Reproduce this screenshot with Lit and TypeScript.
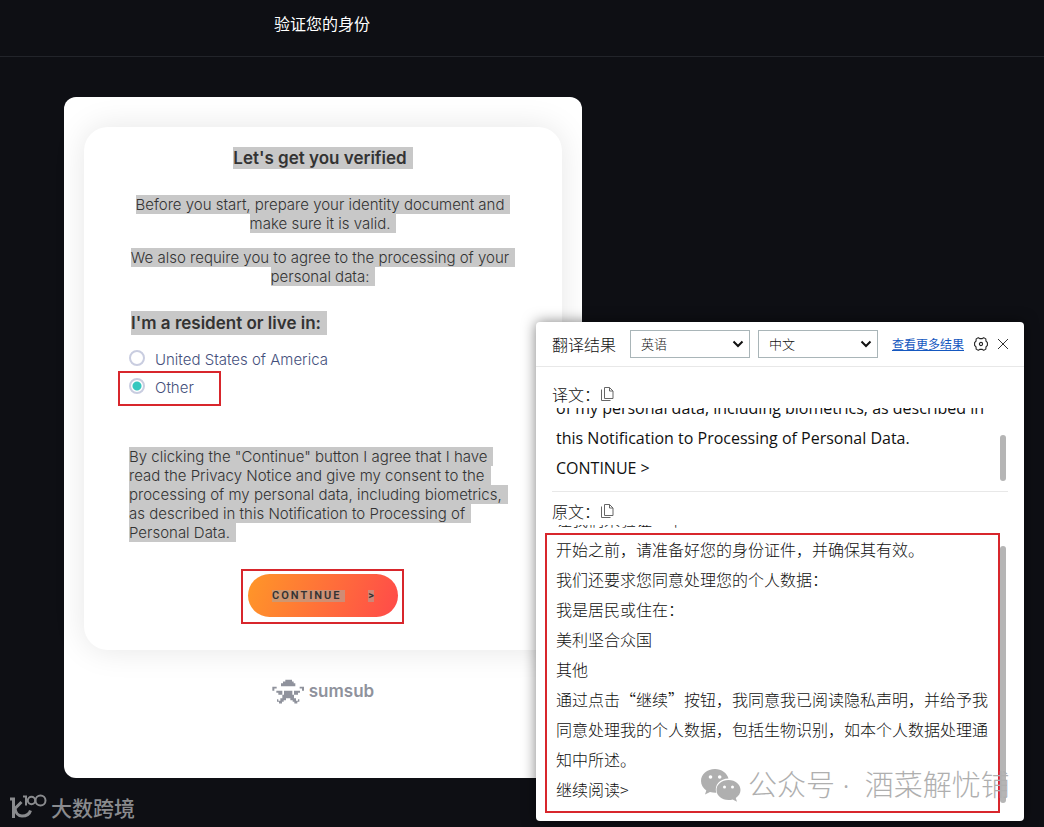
import { LitElement, html, css, svg } from "lit";
import { customElement, state } from "lit/decorators.js";

const copyIcon = svg`<svg width="13" height="14" viewBox="0 0 13 14" fill="none" stroke="#666" stroke-width="1">
  <path d="M3.500 .5h5l3.500 3.500v7.500h-8.500z"/><path d="M8.500 .5v3.500h3.500M.5 2.500v11h9"/></svg>`;

const gearIcon = svg`<svg width="14" height="14" viewBox="0 0 14 14" fill="none" stroke="#222" stroke-width="1.100">
  <path stroke-linejoin="round" d="M3.900.9h.9l.9.700h2.600l.9-.7h.9l1.700 1 .2 2.200 1.400 1.600v2.600l-1.400 1.600-.2 2.200-1.700 1h-.9l-.9-.7h-2.600l-.9.7h-.9l-1.700-1-.2-2.200L.6 8.300v-2.600l1.400-1.600.2-2.200z"/><circle cx="7" cy="7" r="1.600"/></svg>`;

const closeIcon = svg`<svg width="12" height="12" viewBox="0 0 12 12" fill="none" stroke="#333" stroke-width="1"><path d="M1 1l10 10M11 1L1 11"/></svg>`;

const brandIcon = svg`<svg width="32" height="25" viewBox="68 55 96 74" fill="#8f929c">
  <path d="M108 57h20v5h5v5h5v9H95v-9h6v-5h7z"/>
  <path d="M69 78h13v5h-7v7h-6zM151 78h13v12h-6v-7h-7z"/>
  <path d="M81 90h18v12h-12v-6h-6zM134 90h18v6h-6v6h-12z"/>
  <path d="M104 90h25v12h5v16h-11v-6h-13v6h-11v-16h5z"/>
  <path d="M93 112h10v11h-5v5h-9v-5h-6v-8h4v5h6zM140 112h-10v11h5v5h9v-5h6v-8h-4v5h-6z"/></svg>`;

const chatIcon = svg`<svg width="40" height="33" viewBox="0 0 40 33">
  <path fill="#afafaf" d="M14 0C6 0 0 5.200 0 12c0 4 2 7.200 5.300 9.400L4 25.500l5-2.500c2 .6 4 .9 6.300.8C13 16 19 9.500 27.500 9.500 26 4 20.500 0 14 0z"/>
  <path fill="#afafaf" d="M27.500 11C20.500 11 15.500 15.500 15.500 21s5 10 12 10c1.500 0 2.900-.2 4.200-.6l4.300 2.300-1.200-3.800C37.800 27 39.500 24.200 39.500 21c0-5.500-5-10-12-10z"/>
  <g fill="#fff"><circle cx="9.500" cy="8" r="1.800"/><circle cx="18.700" cy="8" r="1.800"/><circle cx="23.500" cy="18" r="1.500"/><circle cx="31.500" cy="18" r="1.500"/></g></svg>`;

const centuryIcon = svg`<svg width="37" height="26" viewBox="0 0 37 26" fill="none" stroke="#8a8b8e">
  <path stroke-width="3" d="M0 5h3.500v19M11.500 8l-6.500 6.500c.5 4 3 7.500 7 7.500 4.500 0 7.500-2 8.500-5.500"/>
  <path stroke-width="2" d="M13 2.500h3v9"/><circle stroke-width="2" cx="21.500" cy="6.500" r="3.700"/><circle stroke-width="2" cx="30.500" cy="6.500" r="5"/></svg>`;

@customElement("verify-card")
class VerifyCard extends LitElement {
  @state() private country = "other";

  static styles = css`
    :host { display: block; max-width: 518px; box-sizing: border-box; padding: 30px 20px; border-radius: 12px; background: #fff; font-family: Inter, "Noto Sans CJK SC", sans-serif; color: #333; }
    h1, h2, p { margin: 0; }
    .panel { padding: 20px 45px 33px; border-radius: 24px; box-shadow: 0 0 32px rgba(0, 0, 0, 0.1); }
    .line { display: block; width: fit-content; padding-right: 6px; background: #c8c8c8; white-space: nowrap; }
    .center .line { margin: 0 auto; }
    h1 { font-size: 17px; line-height: 22px; font-weight: 600; margin-bottom: 26px; }
    h2 { font-size: 17px; line-height: 24px; font-weight: 600; margin: 25px 0 10px; padding-left: 2px; }
    p { font-size: 15px; line-height: 19px; font-weight: 300; }
    .intro { margin-bottom: 15px; }
    fieldset { border: 0; margin: 0 0 46px; padding: 0; min-width: 0; }
    label { position: relative; display: flex; align-items: center; gap: 10px; width: fit-content; height: 28px; font-size: 15px; color: #45507c; font-weight: 300; }
    input { appearance: none; box-sizing: border-box; width: 16px; height: 16px; margin: 0 0 2px; border: 2px solid #c9cde0; border-radius: 50%; background: #fff; }
    input:checked { background: radial-gradient(circle, #35c7bf 4px, #fff 5px); }
    .mark { position: absolute; border: 2px solid #d8262c; pointer-events: none; }
    .mark-option { inset: -2px -27px -5px -11px; }
    .mark-action { inset: -5px -6px -7px -7px; }
    .action { position: relative; width: fit-content; margin: 32px auto 0; }
    button { display: flex; align-items: center; justify-content: space-between; width: 150px; height: 43px; padding: 0 24px; border: 0; border-radius: 22px; background: linear-gradient(110deg, #ff9728, #ff4a4a); font: 600 11px/12px Roboto, sans-serif; color: #333; }
    .word { letter-spacing: 2px; padding-right: 3px; }
    button span { background: rgba(175, 165, 155, 0.6); }
    .brand { display: flex; align-items: center; justify-content: center; gap: 5px; margin: 28px 0 44px; font: 600 17px/26px Inter, sans-serif; color: #8f929c; }
  `;

  private option(value: string, text: string) {
    return html`<label>
      <input type="radio" name="country" .checked=${this.country === value} @change=${() => (this.country = value)} />${text}
      ${value === "other" ? html`<span class="mark mark-option"></span>` : ""}
    </label>`;
  }

  render() {
    return html`
      <section class="panel">
        <h1 class="center"><span class="line">Let's get you verified</span></h1>
        <p class="center intro"><span class="line">Before you start, prepare your identity document and </span><span class="line">make sure it is valid. </span></p>
        <p class="center"><span class="line">We also require you to agree to the processing of your </span><span class="line">personal data:</span></p>
        <h2><span class="line">I'm a resident or live in:</span></h2>
        <fieldset>${this.option("usa", "United States of America")}${this.option("other", "Other")}</fieldset>
        <p><span class="line">By clicking the "Continue" button I agree that I have</span><span class="line">read the Privacy Notice and give my consent to the</span><span class="line">processing of my personal data, including biometrics,</span><span class="line">as described in this Notification to Processing of</span><span class="line">Personal Data.</span></p>
        <div class="action">
          <button type="button"><span class="word">CONTINUE</span><span>&gt;</span></button>
          <span class="mark mark-action"></span>
        </div>
      </section>
      <div class="brand">${brandIcon}<span>sumsub</span></div>
    `;
  }
}

@customElement("translate-popup")
class TranslatePopup extends LitElement {
  static styles = css`
    :host { display: flex; flex-direction: column; box-sizing: border-box; border-radius: 4px; background: #fff; box-shadow: 0 0 14px rgba(0, 0, 0, 0.5); font-family: "Noto Sans", "Noto Sans CJK SC", sans-serif; font-size: 16px; font-weight: 300; color: #111; }
    header { display: flex; align-items: center; height: 44px; padding: 0 15px 0 16px; border-bottom: 1px solid #e8e8e8; }
    .title { flex: 1; white-space: nowrap; }
    .pick { position: relative; margin-right: 8px; }
    select { display: block; appearance: none; width: 120px; height: 28px; padding: 0 10px 2px; border: 1px solid #a9b5b8; border-radius: 0; background: #fff; color: #111; font: 300 13px "Noto Sans CJK SC", sans-serif; }
    .pick svg { position: absolute; right: 6px; top: 10px; pointer-events: none; }
    a { margin: 0 10px 0 6px; font-size: 12px; font-weight: 400; color: #1558c0; white-space: nowrap; }
    button { display: flex; padding: 0; border: 0; background: none; }
    .tools { display: flex; align-items: center; gap: 9px; }
    section { margin: 0 16px; }
    .result { border-bottom: 1px solid #e8e8e8; padding: 13px 0 8px; }
    .source { padding-top: 5px; }
    .caption { display: flex; align-items: center; gap: 1px; height: 28px; }
    .scroll { position: relative; display: flex; flex-direction: column; justify-content: flex-end; overflow: hidden; padding-left: 4px; line-height: 30px; }
    .scroll p { margin: 0; white-space: nowrap; }
    .result .scroll { height: 75px; font-family: "Open Sans", sans-serif; font-weight: 400; }
    .source .scroll { height: 279px; font-family: "Noto Sans CJK SC", sans-serif; }
    .thumb { position: absolute; right: 2px; width: 6px; border-radius: 3px; background: #b5b5b5; }
    .result .thumb { top: 27px; bottom: 2px; }
    .source .thumb { top: 21px; bottom: 1px; }
    .mark { position: absolute; inset: 211px 24px 8px 9px; border: 2px solid #d8262c; pointer-events: none; }
    .stamp { position: absolute; left: 165px; bottom: 16px; display: flex; align-items: center; gap: 7px; font: 300 29px/40px "Noto Sans", "Noto Sans CJK SC", sans-serif; color: #afafaf; white-space: pre; pointer-events: none; }
  `;

  private pick(label: string, value: string) {
    return html`<span class="pick"><select aria-label=${label}><option>${value}</option></select>
      <svg width="12" height="8" viewBox="0 0 12 8" fill="none" stroke="#111" stroke-width="2"><path d="M1.500 1.500l4.500 4.500 4.500-4.500"/></svg></span>`;
  }

  render() {
    const source = ["让我们来验证一下", "开始之前，请准备好您的身份证件，并确保其有效。", "我们还要求您同意处理您的个人数据：", "我是居民或住在：", "美利坚合众国", "其他", "通过点击“继续”按钮，我同意我已阅读隐私声明，并给予我", "同意处理我的个人数据，包括生物识别，如本个人数据处理通", "知中所述。", "继续阅读>"];
    const result = ["of my personal data, including biometrics, as described in", "this Notification to Processing of Personal Data.", "CONTINUE >"];
    return html`
      <header>
        <span class="title">翻译结果</span>
        ${this.pick("源语言", "英语")}${this.pick("目标语言", "中文")}
        <a href="#">查看更多结果</a>
        <span class="tools"><button type="button" aria-label="设置">${gearIcon}</button><button type="button" aria-label="关闭">${closeIcon}</button></span>
      </header>
      <section class="result">
        <div class="caption">译文：<button type="button" aria-label="复制">${copyIcon}</button></div>
        <div class="scroll">${result.map((t) => html`<p>${t}</p>`)}<span class="thumb"></span></div>
      </section>
      <section class="source">
        <div class="caption">原文：<button type="button" aria-label="复制">${copyIcon}</button></div>
        <div class="scroll" lang="zh-CN">${source.map((t) => html`<p>${t}</p>`)}<span class="thumb"></span></div>
      </section>
      <span class="mark"></span>
      <div class="stamp">${chatIcon}<span>公众号 ·  酒菜解忧铺</span></div>
    `;
  }
}

@customElement("app-root")
class AppRoot extends LitElement {
  static styles = css`
    :host { display: block; position: relative; min-height: 100vh; overflow: hidden; background: #0e0f14; font-family: "Noto Sans CJK SC", sans-serif; }
    .top { display: flex; align-items: center; height: 46px; padding: 0 274px 10px; border-bottom: 1px solid #22242a; color: #fff; font-size: 16px; }
    main { padding: 40px 64px 49px; }
    translate-popup { position: absolute; right: 20px; bottom: 6px; width: 488px; height: 499px; }
    .credit { position: absolute; left: 10px; bottom: 5px; display: flex; align-items: center; gap: 4px; color: #8a8b8e; font-size: 21px; line-height: 30px; font-weight: 500; }
  `;

  render() {
    return html`
      <div class="top">验证您的身份</div>
      <main><verify-card></verify-card></main>
      <translate-popup></translate-popup>
      <div class="credit">${centuryIcon}<span>大数跨境</span></div>
    `;
  }
}
